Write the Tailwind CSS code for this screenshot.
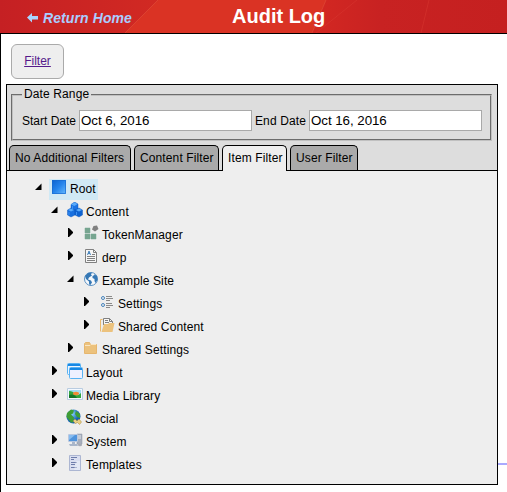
<!DOCTYPE html>
<html lang="en">
<head>
<meta charset="utf-8">
<title>Audit Log</title>
<script src="https://cdn.jsdelivr.net/npm/@tailwindcss/browser@4"></script>
</head>
<body class="bg-white">
<svg class="hidden">
  <defs>
    <symbol id="open" viewBox="0 0 16 23"><path d="M6.500 6.500v6.500H0z" fill="#000"/></symbol>
    <symbol id="closed" viewBox="0 0 16 23"><path d="M1 5h1l4 4v1l-4 4H1z" fill="#000"/></symbol>
  </defs>
</svg>
<div class="flex h-[492px] w-[507px] flex-col overflow-hidden font-['Liberation_Sans',Arial,sans-serif] text-[12px] text-black">
  <header class="relative flex h-[34px] shrink-0 border-b border-black">
    <svg class="absolute inset-0" width="507" height="33" viewBox="0 0 507 33" preserveAspectRatio="none">
      <defs>
        <linearGradient id="h1"><stop offset="0" stop-color="#c52023"/><stop offset=".3" stop-color="#d12923"/></linearGradient>
        <linearGradient id="h2"><stop offset="0" stop-color="#d42822"/><stop offset=".35" stop-color="#c82222"/><stop offset="1" stop-color="#c52020"/></linearGradient>
      </defs>
      <path fill="url(#h1)" d="M0 0h507v33H0z"/>
      <path fill="#da3324" d="M158 0h168l-14 33H125z"/>
      <path fill="url(#h2)" d="M326 0h181v33H312z"/>
      <path d="M158 0l-33 33M326 0l-14 33" stroke="#e2503a" stroke-opacity=".6" fill="none"/>
      <path d="M357 0l-41 33M429 0l-8 33" stroke="#d93a32" stroke-opacity=".5" fill="none"/>
    </svg>
    <a class="relative flex h-9 items-center pl-[27px] text-[14px] font-bold italic tracking-[0.1px] text-[#aaccff]">
      <svg class="mr-[5px]" width="11" height="10" viewBox="0 0 11 10"><path d="M0 4.500L5 0v3h6v3.500H5V9.500z" fill="#aad4ff"/></svg>
      <span>Return Home</span>
    </a>
    <h1 class="absolute left-[232px] top-[4px] text-[20px] font-bold leading-6 text-white">Audit Log</h1>
  </header>

  <main class="relative flex-1 border-l border-black pl-[5px] pt-[10px]">
    <div class="ml-[5px] flex h-[35px] w-[53px] items-center justify-center rounded-[6px] border border-[#aaa] bg-[#eee] pb-[2px]">
      <a class="text-[12px] text-[#551a8b] underline">Filter</a>
    </div>

    <section class="mt-[5px] flex h-[401px] w-[492px] flex-col border border-black bg-[#eee] tracking-[0.12px]">
      <div class="h-[86px] shrink-0 border-b border-black bg-[#ddd] pl-1 pr-[5px] pt-[2px]">
        <fieldset class="h-[54px] border-2 border-[#c0c0c0] [border-style:groove] pl-[9px]">
          <legend class="h-[15px] px-[2px] leading-[15px]">Date Range</legend>
          <div class="mt-[8px] flex items-center">
            <label class="w-[57px] whitespace-nowrap tracking-normal">Start Date</label>
            <input class="h-[21px] w-[173px] border border-[#a9a9a9] bg-white px-px text-[13.33px] tracking-[-0.05px]" value="Oct 6, 2016">
            <label class="ml-[3px] w-[54px] whitespace-nowrap">End Date</label>
            <input class="h-[21px] w-[173px] border border-[#a9a9a9] bg-white px-px text-[13.33px] tracking-[-0.05px]" value="Oct 16, 2016">
          </div>
        </fieldset>
        <nav class="-ml-[2px] mt-[4px] flex gap-[3px] whitespace-nowrap leading-[25px]">
          <a class="h-[25px] w-[122px] rounded-t-[5px] border border-b-0 border-black bg-[#aaa] pl-[5px]">No Additional Filters</a>
          <a class="h-[25px] w-[85px] rounded-t-[5px] border border-b-0 border-black bg-[#aaa] pl-[5px]">Content Filter</a>
          <a class="h-[26px] w-[65px] rounded-t-[5px] border border-b-0 border-black bg-[#eee] pl-[5px]">Item Filter</a>
          <a class="h-[25px] w-[68px] rounded-t-[5px] border border-b-0 border-black bg-[#aaa] pl-[5px]">User Filter</a>
        </nav>
      </div>

      <ul class="whitespace-nowrap pl-7 pt-[6px] leading-[25px]">
        <li class="flex h-[23px]">
          <svg class="h-[23px] w-[14px]" viewBox="0 0 14 23"><use href="#open" width="16" height="23"/></svg>
          <span class="mt-[2px] flex h-[21px] w-[49px] bg-[#d0e9f5] pl-[2px]">
            <svg class="mr-[3px] shrink-0" width="16" height="18" viewBox="0 0 16 18"><defs><linearGradient id="r" x1="0" y1="0" x2="1" y2="1"><stop stop-color="#0a62cf"/><stop offset=".5" stop-color="#2585ec"/><stop offset="1" stop-color="#66bbff"/></linearGradient></defs><path d="M1 1h14v14H1z" fill="url(#r)"/><path d="M1.500 1.500h13v13h-13z" fill="none" stroke="#176bd0" stroke-opacity=".7"/></svg>
            <span class="leading-[21px]">Root</span>
          </span>
        </li>
        <li class="flex h-[23px] pl-4">
          <svg class="h-[23px] w-4"><use href="#open" width="16" height="23"/></svg>
          <svg class="mr-[3px] mt-[2px]" width="16" height="16" viewBox="0 0 16 16"><g stroke="#0650b8" stroke-width=".4"><path d="M4 2.500L7.500 0 11 2v5L8 8.500 4 7z" fill="#1c73e4"/><path d="M.5 8L4 6l4 2v5l-4 2-3.500-2z" fill="#176fdf"/><path d="M8 8l4-2 3.500 2v5L12 15l-4-2z" fill="#0d62d1"/></g><path d="M4 2.500L7.500.5l3 1.500-3 2zM1 8l3-1.500L7 8l-3 1.500zM9 8l3-1.500L15 8l-3 1.500z" fill="#5aabfb"/><path d="M2 10v3M5.500 4v3M9.500 10v3" stroke="#3d93f5"/></svg>
          <span>Content</span>
        </li>
        <li class="flex h-[23px] pl-8">
          <svg class="h-[23px] w-4"><use href="#closed" width="16" height="23"/></svg>
          <svg class="mr-[3px] mt-[2px]" width="16" height="16" viewBox="0 0 16 16"><path d="M2 3h5v5H2zM2 9h5v5H2zM8 9h5v5H8z" fill="#77a590" stroke="#77a590" stroke-width=".5"/><path d="M10.500 1l3.500-.5L15.500 4l-3.500 2.500L9 4.500z" fill="#808080"/></svg>
          <span>TokenManager</span>
        </li>
        <li class="flex h-[23px] pl-8">
          <svg class="h-[23px] w-4"><use href="#closed" width="16" height="23"/></svg>
          <svg class="mr-[3px] mt-[2px]" width="16" height="16" viewBox="-1 0 16 16"><path d="M1.500 1.500h8l3 3v10h-11z" fill="#f6f6f6" stroke="#808080"/><path d="M9.500 1.500v3h3M8 6.500h3M3 8.500h8M3 10.500h8M3 12.500h8" fill="none" stroke="#808080"/><path d="M3.500 7L5 3l1.500 4M4 5.500h2" fill="none" stroke="#4684bd"/></svg>
          <span>derp</span>
        </li>
        <li class="flex h-[23px] pl-8">
          <svg class="h-[23px] w-4"><use href="#open" width="16" height="23"/></svg>
          <svg class="mr-[3px] mt-[2px]" width="16" height="16" viewBox="0 0 16 16"><circle cx="8" cy="8" r="6.500" fill="#f5f8fb" stroke="#5b91c4"/><path d="M2 5l3-3 4-.5-1 2 1 1-3 2-1 2 3 1 1 2-2 3-1-2v-2L3 8zM11 3l3 2 .5 4-2 3-1-2V8l-2-1 0-2 2-1z" fill="#3678b5"/></svg>
          <span>Example Site</span>
        </li>
        <li class="flex h-[23px] pl-12">
          <svg class="h-[23px] w-4"><use href="#closed" width="16" height="23"/></svg>
          <svg class="mr-[3px] mt-[2px]" width="16" height="16" viewBox="-1 -1 16 16"><g fill="none" stroke="#4684bd"><circle cx="3" cy="3" r="1.500"/><circle cx="3" cy="10" r="1.500"/></g><path d="M6 1.500h6M6 3.500h7M6 5.500h4M6 8.500h6M6 10.500h7M6 12.500h4" stroke="#8a8a8a"/></svg>
          <span>Settings</span>
        </li>
        <li class="flex h-[23px] pl-12">
          <svg class="h-[23px] w-4"><use href="#closed" width="16" height="23"/></svg>
          <svg class="mr-[3px] mt-[2px]" width="16" height="16" viewBox="-1 0 16 16"><path d="M2.500 2.500h-2v12" fill="none" stroke="#e9b96e"/><path d="M3.500 8V1.500h6l3 3V8" fill="#f6f6f6" stroke="#808080"/><path d="M9.500 1.500v3h3M5 3.500h3M5 5.500h4" fill="none" stroke="#808080"/><path d="M4 7h4l1-1h5.500l-2 9H1.500z" fill="#ecc27d"/></svg>
          <span>Shared Content</span>
        </li>
        <li class="flex h-[23px] pl-8">
          <svg class="h-[23px] w-4"><use href="#closed" width="16" height="23"/></svg>
          <svg class="mr-[3px] mt-[2px]" width="16" height="16" viewBox="-1 -1 16 16"><path d="M.5 12.500v-10l1-1h4l1 2h6v9z" fill="#ecc27d" stroke="#e6b66e"/><path d="M1 4.500h5l1-1h5" fill="none" stroke="#f9e6c5"/></svg>
          <span>Shared Settings</span>
        </li>
        <li class="flex h-[23px] pl-4">
          <svg class="h-[23px] w-4"><use href="#closed" width="16" height="23"/></svg>
          <svg class="mr-[3px] mt-[2px]" width="16" height="16" viewBox="0 0 16 16"><rect x=".5" y=".5" width="13" height="11" rx="1" fill="#eef5ff" stroke="#58b2f3"/><path d="M1 1h12v2H1z" fill="#1888e4"/><rect x="2.500" y="4.500" width="13" height="11" rx="1" fill="#edf0ff" stroke="#58b2f3"/><path d="M3 5h12v2H3z" fill="#1888e4"/></svg>
          <span>Layout</span>
        </li>
        <li class="flex h-[23px] pl-4">
          <svg class="h-[23px] w-4"><use href="#closed" width="16" height="23"/></svg>
          <svg class="mr-[3px] mt-[2px]" width="16" height="16" viewBox="0 0 16 16"><path d="M.5 2.500h15v11H.5z" fill="#f4f9ff" stroke="#b9cce0"/><path d="M2 4h12v5H2z" fill="#a2dcf5"/><path d="M2 5q4 0 6 3t6-1v5H2z" fill="#35a53d"/><path d="M2 9q5-2 8 3H2z" fill="#147528"/><ellipse cx="9" cy="7.500" rx="3" ry="1.700" fill="#f28a35"/></svg>
          <span>Media Library</span>
        </li>
        <li class="flex h-[23px] pl-[31px]">
          <svg class="mr-[3px] mt-[2px]" width="16" height="16" viewBox="0 0 16 16"><defs><radialGradient id="s" cx=".4" cy=".3"><stop stop-color="#8bd4ff"/><stop offset="1" stop-color="#1764ae"/></radialGradient></defs><circle cx="7.500" cy="7.500" r="7" fill="url(#s)"/><path d="M1 4l4-3.500 3 1-1 3-2 1 3 3-1 5H5L3 11 .5 8zM10 2l4 3v4l-3-1-2-3z" fill="#3f9d35"/><path d="M7 12l2-2 2 2 2-2 2.500 3-2 2.500-2-2-2 1z" fill="#ead083" stroke="#a68638" stroke-width=".5"/></svg>
          <span>Social</span>
        </li>
        <li class="flex h-[23px] pl-4">
          <svg class="h-[23px] w-4"><use href="#closed" width="16" height="23"/></svg>
          <svg class="mr-[3px] mt-[2px]" width="16" height="16" viewBox="0 0 16 16"><path d="M10 2h5v10l-2 1-3-1z" fill="#a7afbd" stroke="#8c95a7" stroke-width=".5"/><path d="M11 4h3M11 6h3" stroke="#e4e8ef"/><rect x="1" y="2" width="10" height="8" rx="1" fill="#b8c7df"/><path d="M2 3h8v6H2z" fill="#4f94dc"/><path d="M2 3h6L2 8z" fill="#86bcf0"/><path d="M5 10h3v2H5zM2 12h8l1 2H3z" fill="#a9b6ca"/><ellipse cx="13" cy="13" rx="2" ry="1.300" fill="#a5a9b4"/></svg>
          <span>System</span>
        </li>
        <li class="flex h-[23px] pl-4">
          <svg class="h-[23px] w-4"><use href="#closed" width="16" height="23"/></svg>
          <svg class="mr-[3px] mt-[2px]" width="16" height="16" viewBox="0 0 16 16"><path d="M2.500.5h11v15h-11z" fill="#d9def0" stroke="#acb6d2"/><path d="M4 2.500h6M4 4.500h3M4 7.500h6M4 9.500h4M4 12.500h6" stroke="#6e7dab"/><path d="M9 6h4v9H7z" fill="#eef1fa" opacity=".5"/></svg>
          <span>Templates</span>
        </li>
      </ul>
    </section>
    <div class="absolute right-0 top-[429px] h-[2px] w-[9px] bg-[#aaaaff]"></div>
  </main>
</div>
</body>
</html>
